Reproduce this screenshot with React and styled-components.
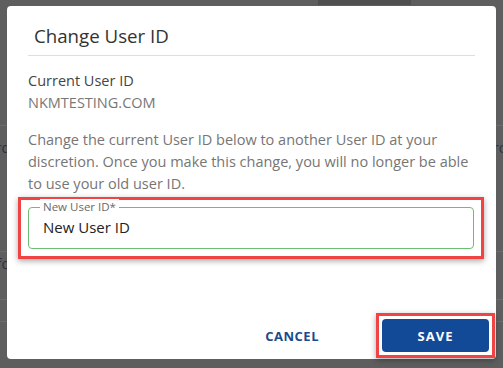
import styled, { createGlobalStyle } from "styled-components";

const GlobalStyle = createGlobalStyle`
  html, body {
    margin: 0;
    padding: 0;
    background: #5e5e5e;
    font-family: "Open Sans", "Liberation Sans", sans-serif;
  }
  * {
    box-sizing: border-box;
  }
`;

/* page behind the modal, dimmed */
export const Behind = styled.div`
  width: 503px;
  height: 368px;
  background: #5e5e5e;
  overflow: hidden;
`;

export const BehindHeader = styled.div`
  height: 126px;
  border-bottom: 1px solid #6c6c6c;
`;

export const GhostButton = styled.div`
  margin-left: 318px;
  width: 93px;
  height: 5px;
  background: #4f4f4f;
`;

export const BehindRow = styled.div`
  display: flex;
  justify-content: space-between;
  align-items: ${(p) => p.$align || "center"};
  height: ${(p) => p.$h}px;
  padding-top: ${(p) => p.$pt || 0}px;
  border-bottom: 1px solid #6c6c6c;
`;

export const EdgeText = styled.div`
  display: flex;
  justify-content: ${(p) => (p.$right ? "flex-start" : "flex-end")};
  width: 10px;
  white-space: nowrap;
  font-size: 14px;
  color: #2a3344;
`;

export const Overlay = styled.div`
  position: fixed;
  inset: 0;
  display: flex;
  justify-content: center;
  align-items: flex-start;
  padding-top: 6px;
`;

export const Dialog = styled.div`
  display: flex;
  flex-direction: column;
  width: 489px;
  height: 353px;
  padding: 18px 21px 0 21px;
  background: #ffffff;
  border-radius: 4px;
`;

export const Title = styled.h2`
  margin: 0;
  padding: 0 6px 7px;
  font-size: 18.7px;
  line-height: 24px;
  font-weight: 400;
  color: #333333;
  border-bottom: 1px solid #dedede;
`;

export const Body = styled.div`
  padding-top: 14px;
  font-size: 14.5px;
  line-height: 22px;
`;

export const Label = styled.div`
  color: #444444;
`;

export const Value = styled.div`
  color: #777777;
`;

export const Paragraph = styled.p`
  margin: 15px 0 0;
  color: #767676;
`;

export const Highlight = styled.div`
  border: 3px solid #f04444;
  padding: ${(p) => p.$pad || "7px"};
  box-shadow: 0 2px 6px rgba(0, 0, 0, 0.35);
`;

export const FieldHighlight = styled(Highlight)`
  margin: 2px -9px 0 -10px;
`;

export const Field = styled.div`
  position: relative;
  height: 42px;
  border: 1px solid #6dbd72;
  border-radius: 4px;
`;

export const FieldLabel = styled.span`
  position: absolute;
  top: -9px;
  left: 11px;
  padding: 0 3px;
  background: #ffffff;
  font-size: 11.5px;
  line-height: 16px;
  color: #6a6a6a;
`;

export const Input = styled.input`
  width: 100%;
  height: 100%;
  padding: 0 14px 2px;
  border: none;
  outline: none;
  background: transparent;
  font-family: inherit;
  font-size: 15px;
  color: #222222;
`;

export const Footer = styled.div`
  display: flex;
  justify-content: flex-end;
  align-items: center;
  margin: auto -20px 1px 0;
`;

export const Button = styled.button`
  height: 33px;
  padding: 0 16px;
  border: none;
  border-radius: 4px;
  font-family: inherit;
  font-size: 13px;
  font-weight: 700;
  letter-spacing: ${(p) => (p.$primary ? "1px" : "0.5px")};
  text-transform: uppercase;
  cursor: pointer;
  background: ${(p) => (p.$primary ? "#124a97" : "transparent")};
  color: ${(p) => (p.$primary ? "#ffffff" : "#1b4b8c")};
  width: ${(p) => (p.$primary ? "107px" : "auto")};
`;

export const CancelButton = styled(Button)`
  margin-right: 41px;
`;

function App() {
  return (
    <>
      <GlobalStyle />
      <Behind>
        <BehindHeader>
          <GhostButton />
        </BehindHeader>
        <BehindRow $h={126} $align="flex-start" $pt={12}>
          <EdgeText>Password</EdgeText>
          <EdgeText $right>rc</EdgeText>
        </BehindRow>
        <BehindRow $h={48} $align="flex-start" $pt={2}>
          <EdgeText>Info</EdgeText>
        </BehindRow>
        <BehindRow $h={22} />
      </Behind>
      <Overlay>
        <Dialog>
          <Title>Change User ID</Title>
          <Body>
            <Label>Current User ID</Label>
            <Value>NKMTESTING.COM</Value>
            <Paragraph>
              Change the current User ID below to another User ID at your
              discretion. Once you make this change, you will no longer be able
              to use your old user ID.
            </Paragraph>
            <FieldHighlight>
              <Field>
                <FieldLabel>New User ID*</FieldLabel>
                <Input defaultValue="New User ID" />
              </Field>
            </FieldHighlight>
          </Body>
          <Footer>
            <CancelButton>Cancel</CancelButton>
            <Highlight $pad="3px">
              <Button $primary>Save</Button>
            </Highlight>
          </Footer>
        </Dialog>
      </Overlay>
    </>
  );
}

export default App;
